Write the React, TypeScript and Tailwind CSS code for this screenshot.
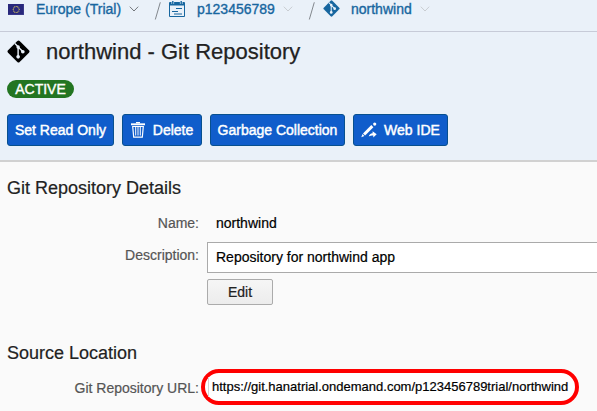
import type { ReactNode } from "react";

function GitIcon({ className }: { className: string }) {
  return (
    <svg viewBox="0 0 24 24" className={className}>
      <path d="M10.8 1.1a1.7 1.7 0 0 1 2.4 0l9.7 9.7a1.7 1.7 0 0 1 0 2.4l-9.7 9.7a1.7 1.7 0 0 1-2.4 0L1.1 13.2a1.7 1.7 0 0 1 0-2.4z" fill="currentColor" />
      <path d="M8.2 3.6l3.4 3.4v10.5M11.6 7.2l4.9 4.9" fill="none" stroke="#eaf1f9" strokeWidth="1.5" />
      <circle cx="11.6" cy="7.2" r="1.8" fill="#eaf1f9" />
      <circle cx="16.5" cy="12.3" r="1.9" fill="#eaf1f9" />
      <circle cx="11.6" cy="17.6" r="1.9" fill="#eaf1f9" />
    </svg>
  );
}

function FlagIcon() {
  const stars = Array.from({ length: 12 }, (_, i) => (i * Math.PI) / 6);
  return (
    <svg viewBox="0 0 16 11" className="mt-px h-[11px] w-4 shrink-0">
      <rect width="16" height="11" fill="#28287c" />
      <path d="M0 11h16V0" fill="none" stroke="#4a4a96" />
      {stars.map((a) => (
        <circle key={a} cx={8.2 + Math.cos(a) * 3} cy={5.5 + Math.sin(a) * 3} r="0.6" fill="#e0d05b" />
      ))}
    </svg>
  );
}

function AccountIcon() {
  return (
    <svg viewBox="0 0 16 16" className="size-4 shrink-0" fill="none" stroke="#17669f">
      <path d="M.5 1.5h15v14H.5z" />
      <path d="M1 2h14v2.5H1z" fill="#17669f" stroke="none" />
      <path d="M3.8 0v3M12.2 0v3" stroke="#eaf1f9" strokeWidth="2.6" />
      <path d="M3.8 0v3M12.2 0v3" strokeWidth="1.4" />
      <path d="M7 7.5h6M3 10.5h6M5 13h8" strokeWidth="1.1" />
    </svg>
  );
}

function Chevron({ className }: { className: string }) {
  return (
    <svg viewBox="0 0 10 6" className={`h-1.5 w-2.5 shrink-0 ${className}`} fill="none" stroke="currentColor">
      <path d="M.8.7L5 5 9.2.7" />
    </svg>
  );
}

function Slash() {
  return (
    <svg viewBox="0 0 8 18" className="mt-0.5 h-[18px] w-2 shrink-0">
      <path d="M6.3.3L1.3 17.5" stroke="#82878d" />
    </svg>
  );
}

function TrashIcon() {
  return (
    <svg viewBox="0 0 14 16" className="h-4 w-3.5 shrink-0" fill="none" stroke="white">
      <path d="M5 .5h4M0 2.5h14" strokeWidth="1.3" />
      <path d="M0 1.8h14" strokeWidth=".8" />
      <path d="M1.7 4.5h10.6l-1 10.7H2.7z" strokeWidth="1.2" />
      <path d="M4.7 5v8.5M7 5v8.5M9.3 5v8.5" strokeWidth="1" />
    </svg>
  );
}

function WandIcon() {
  return (
    <svg viewBox="0 0 16 16" className="size-4 shrink-0" fill="white">
      <path d="M10.3 3.1l2.1 2.1-8.3 8.2L2 11.4z" />
      <path d="M1.5 12l1.9 1.9L.3 15.2z" />
      <circle cx="13.7" cy="2.1" r="1.6" />
      <path d="M11.6 9.3l4.1 3-3.4 3.3v-2.2c-2 0-3.1.2-4.5 1.2.4-2 1.7-3.1 3.8-3.3z" />
    </svg>
  );
}

function ActionButton({ children, className }: { children: ReactNode; className: string }) {
  return (
    <button className={`flex h-8 items-center justify-center rounded-[3px] border border-[#07508f] bg-[#105dcb] text-sm whitespace-nowrap text-white [-webkit-text-stroke:0.45px_white] ${className}`}>
      {children}
    </button>
  );
}

export default function App() {
  return (
    <div className="flex h-[411px] w-[597px] flex-col overflow-hidden bg-[#fafafa] font-['Liberation_Sans',Arial,sans-serif] text-sm text-black">
      <header className="h-[162px] shrink-0 border-b-2 border-[#d1d1d1] bg-[#eaf1f9]">
        <nav className="flex h-8 items-start border-b border-[#c7cbd8] pl-2 text-[#17669f] [-webkit-text-stroke:0.35px_#17669f]">
          <div className="flex h-[18px] w-[146px] items-center">
            <FlagIcon />
            <span className="ml-3 w-[86px] whitespace-nowrap">Europe (Trial)</span>
            <Chevron className="ml-[7px] text-[#73777c]" />
          </div>
          <Slash />
          <div className="ml-[7px] flex h-[18px] w-[139px] items-center">
            <AccountIcon />
            <span className="ml-3 w-[78px]">p123456789</span>
            <Chevron className="ml-2 text-[#c9cdd2]" />
          </div>
          <Slash />
          <div className="ml-[7px] flex h-[18px] items-center">
            <GitIcon className="mt-[-1px] size-[17px]" />
            <span className="ml-[11px] w-[61px]">northwind</span>
            <Chevron className="ml-2 text-[#c9cdd2]" />
          </div>
        </nav>
        <div className="mt-2 flex h-6 items-center pl-[7px]">
          <GitIcon className="mb-[2px] size-[23px] text-black" />
          <h1 className="ml-4 text-[22px] leading-6 whitespace-nowrap text-[#222] [-webkit-text-stroke:0.25px_#222]">northwind - Git Repository</h1>
        </div>
        <div className="mt-4 ml-[7px] flex h-[18px] w-[67px] items-center justify-center rounded-full bg-[#237521] text-sm text-white [-webkit-text-stroke:0.4px_white]">ACTIVE</div>
        <div className="mt-4 flex gap-2 pl-[7px]">
          <ActionButton className="w-[107px]">Set Read Only</ActionButton>
          <ActionButton className="w-20 gap-2"><TrashIcon />Delete</ActionButton>
          <ActionButton className="w-[135px]">Garbage Collection</ActionButton>
          <ActionButton className="w-[95px] gap-[7px]"><WandIcon />Web IDE</ActionButton>
        </div>
      </header>
      <section className="pt-[15px]">
        <h2 className="pl-[7px] text-lg leading-[22px] text-[#222] [-webkit-text-stroke:0.2px_#222]">Git Repository Details</h2>
        <div className="mt-[15px] flex h-[18px] items-center">
          <span className="w-[199px] text-right text-[#555] [-webkit-text-stroke:0.2px_#555]">Name:</span>
          <span className="ml-[17px] [-webkit-text-stroke:0.2px_black]">northwind</span>
        </div>
        <div className="mt-2.5 flex">
          <span className="mt-[3px] w-[199px] text-right text-[#555] [-webkit-text-stroke:0.2px_#555]">Description:</span>
          <div className="ml-2 flex h-[31px] flex-1 items-center border border-r-0 border-[#aaa] bg-white pb-px pl-2 [-webkit-text-stroke:0.2px_black]">Repository for northwind app</div>
        </div>
        <button className="mt-1.5 ml-[207px] flex h-[26px] w-[66px] items-center justify-center rounded-[2px] border border-[#ababab] bg-linear-to-b from-[#f6f6f6] to-[#ececec] text-[#222] [-webkit-text-stroke:0.2px_#222]">Edit</button>
      </section>
      <section className="pt-[37px]">
        <h2 className="pl-[7px] text-lg leading-[22px] text-[#222] [-webkit-text-stroke:0.2px_#222]">Source Location</h2>
        <div className="mt-[5px] flex h-9 items-center">
          <span className="pt-0.5 w-[199px] text-right text-[#555] [-webkit-text-stroke:0.2px_#555]">Git Repository URL:</span>
          <div className="ml-[2px] flex h-9 w-[378px] items-center rounded-[18px] border-4 border-[#f00] bg-white pl-[3px]">
            <span className="h-5 w-px bg-[#d5d5d5]" />
            <span className="ml-[3px] pt-px text-[13px] whitespace-nowrap [-webkit-text-stroke:0.2px_black]">https://git.hanatrial.ondemand.com/p123456789trial/northwind</span>
          </div>
        </div>
      </section>
    </div>
  );
}
